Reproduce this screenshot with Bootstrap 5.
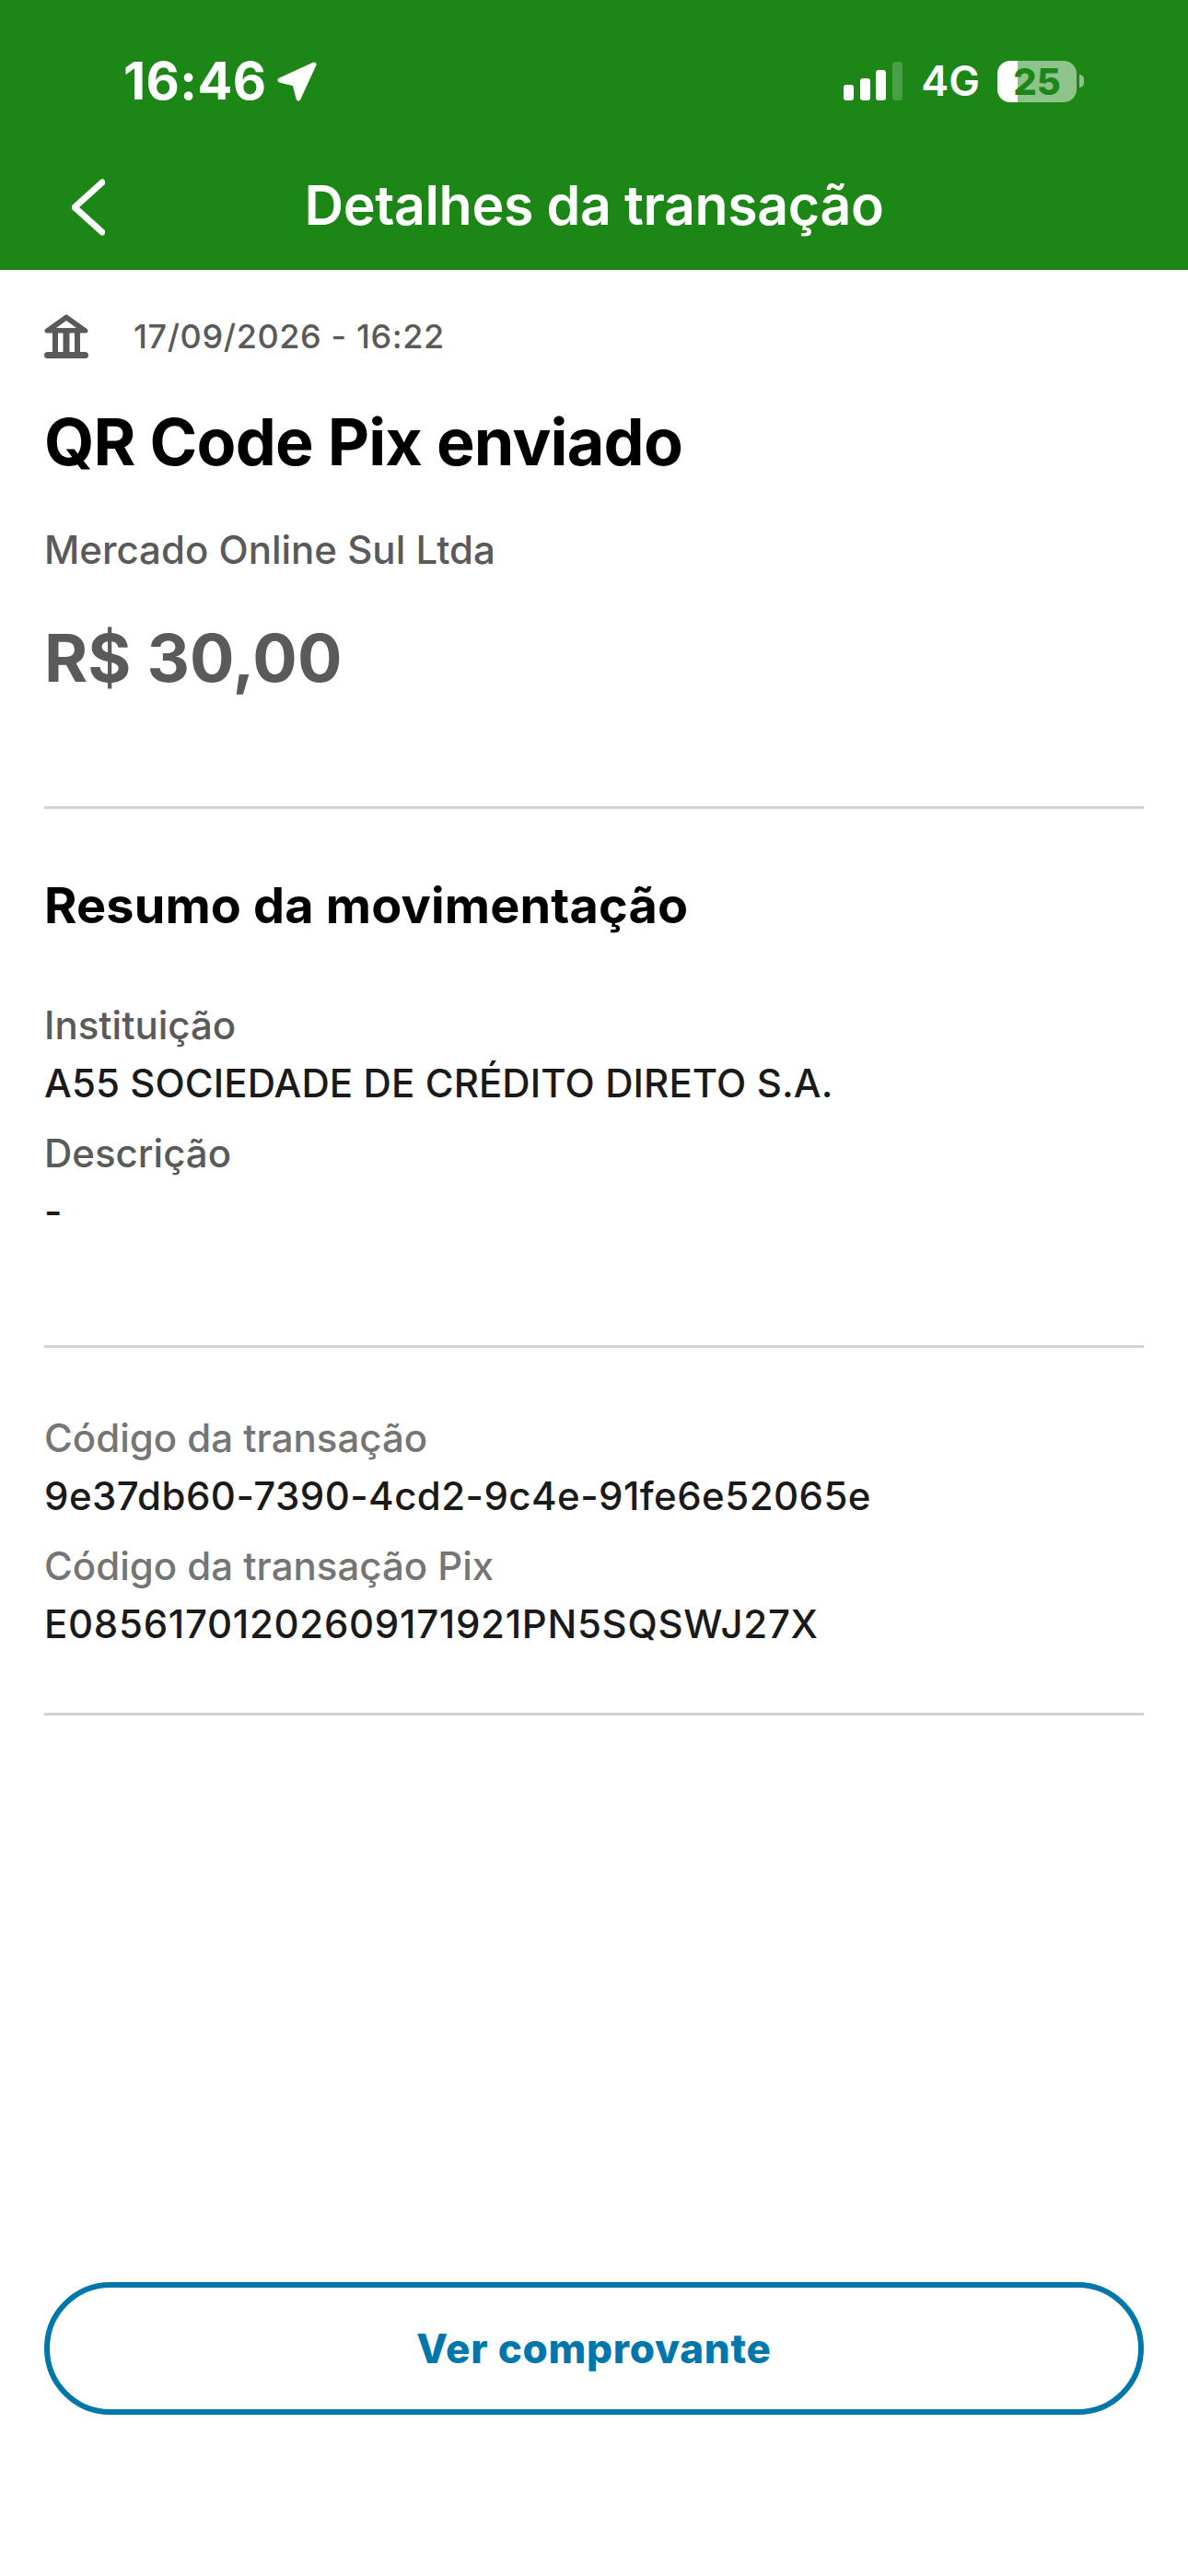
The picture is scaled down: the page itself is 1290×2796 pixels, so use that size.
<!DOCTYPE html>
<html lang="pt-BR">
<head>
    <meta charset="UTF-8">
    <meta name="viewport" content="width=device-width, initial-scale=1.0">
    <title>Detalhes da transação</title>
    <link rel="stylesheet" href="https://cdn.jsdelivr.net/npm/bootstrap@5.3.0/dist/css/bootstrap.min.css">
    <style>
        body {
            font-family: Inter, "Liberation Sans", sans-serif;
            background: #fff;
            height: 2796px;
        }
        .app-top {
            background: #1c8716;
            height: 293px;
            color: #fff;
        }
        .status-row {
            height: 164px;
            padding: 64px 113px 0 134px;
        }
        .clock {
            font-size: 56px;
            font-weight: 700;
            line-height: 48px;
            letter-spacing: .4px;
        }
        .loc-arrow {
            margin-left: 11px;
        }
        .net-label {
            font-size: 45px;
            font-weight: 600;
            line-height: 48px;
            margin: 0 19px;
        }
        .batt {
            width: 86px;
            height: 45px;
            border-radius: 14px;
            background: linear-gradient(to right, #fff 25%, rgba(255, 255, 255, .5) 25%);
            color: #1c8716;
            font-size: 40px;
            font-weight: 800;
            line-height: 45px;
            text-align: center;
        }
        .batt-tip {
            width: 5px;
            height: 14px;
            margin-left: 3px;
            border-radius: 0 7px 7px 0;
            background: rgba(255, 255, 255, .5);
        }
        .title-row {
            height: 118px;
            padding: 0 78px;
        }
        .screen-title {
            font-size: 59px;
            font-weight: 600;
            letter-spacing: -.35px;
            margin: 0;
        }
        .back-slot {
            width: 36px;
            margin-top: 4px;
        }
        .detail-wrap {
            padding: 0 48px;
        }
        .date-row {
            padding-top: 48px;
            color: #5a5a5a;
            font-size: 36px;
            font-weight: 500;
            letter-spacing: .6px;
            line-height: 48px;
            gap: 49px;
        }
        .main-title {
            font-size: 70px;
            font-weight: 700;
            letter-spacing: -.8px;
            color: #000;
            margin: 51px 0 0;
            line-height: 80px;
        }
        .sub-name {
            color: #5a5a5a;
            font-size: 42px;
            font-weight: 500;
            line-height: 50px;
            margin: 52px 0 0;
        }
        .price {
            color: #5a5a5a;
            font-size: 72px;
            font-weight: 700;
            line-height: 86px;
            margin: 49px 0 0;
        }
        .rule {
            border: 0;
            border-top: 3px solid #d2d2d2;
            opacity: 1;
            margin: 0;
        }
        .rule-one {
            margin-top: 118px;
        }
        .rule-two {
            margin-top: 120px;
        }
        .rule-three {
            margin-top: 71px;
        }
        .sec-title {
            font-size: 54px;
            font-weight: 700;
            letter-spacing: .15px;
            color: #000;
            line-height: 64px;
            margin: 73px 0 0;
        }
        .fields-one {
            margin-top: 73px;
        }
        .fields-two {
            margin-top: 73px;
        }
        .field-label {
            color: #5a5a5a;
            font-size: 42px;
            font-weight: 500;
            line-height: 50px;
            margin-bottom: 13px;
        }
        .field-label.soft {
            color: #757575;
        }
        .field-value {
            color: #1a1a1a;
            font-size: 42px;
            font-weight: 500;
            letter-spacing: .1px;
            line-height: 50px;
            margin-bottom: 26px;
        }
        .field-value.code-id {
            letter-spacing: .45px;
        }
        .field-value.code-pix {
            letter-spacing: .7px;
        }
        .comprovante-btn {
            height: 144px;
            margin-top: 615px;
            border: 6px solid #0077aa;
            border-radius: 72px;
            background: #fff;
            color: #0077aa;
            font-size: 44px;
            font-weight: 800;
            letter-spacing: .7px;
        }
    </style>
</head>
<body>
    <div class="app-top">
        <div class="status-row d-flex justify-content-between align-items-start">
            <div class="d-flex align-items-center">
                <span class="clock">16:46</span>
                <svg class="loc-arrow" width="45" height="44" viewBox="0 0 45 44"><path d="M41 4 4 21 20 25 24 41Z" fill="#fff" stroke="#fff" stroke-width="5" stroke-linejoin="round"/></svg>
            </div>
            <div class="d-flex align-items-center">
                <svg width="65" height="42" viewBox="0 0 65 42">
                    <rect x="0" y="25" width="11" height="17" rx="3" fill="#fff"/>
                    <rect x="18" y="18" width="11" height="24" rx="3" fill="#fff"/>
                    <rect x="35" y="9" width="11" height="33" rx="3" fill="#fff"/>
                    <rect x="53" y="0" width="11" height="42" rx="3" fill="#fff" fill-opacity=".2"/>
                </svg>
                <span class="net-label">4G</span>
                <div class="batt">25</div>
                <div class="batt-tip"></div>
            </div>
        </div>
        <div class="title-row d-flex align-items-center justify-content-between">
            <div class="back-slot">
                <svg class="d-block" width="36" height="62" viewBox="0 0 36 62"><path d="M33 4 3 31 33 58" fill="none" stroke="#fff" stroke-width="7" stroke-linecap="round" stroke-linejoin="round"/></svg>
            </div>
            <h1 class="screen-title">Detalhes da transação</h1>
            <div class="back-slot"></div>
        </div>
    </div>

    <div class="detail-wrap">
        <div class="date-row d-flex align-items-center">
            <svg width="48" height="48" viewBox="0 0 48 48" fill="#5a5a5a">
                <path d="M24 3 3 18H45Z" stroke="#5a5a5a" stroke-width="5" stroke-linejoin="round"/>
                <path d="M24 7 13 15H35Z" fill="#fff"/>
                <rect x="9" y="20" width="6" height="24"/>
                <rect x="20.5" y="20" width="7" height="24"/>
                <rect x="33" y="20" width="6" height="24"/>
                <rect x="0" y="41" width="48" height="7" rx="3.5"/>
            </svg>
            <span>17/09/2026 - 16:22</span>
        </div>
        <h2 class="main-title">QR Code Pix enviado</h2>
        <p class="sub-name">Mercado Online Sul Ltda</p>
        <p class="price">R$ 30,00</p>
        <hr class="rule rule-one">

        <h3 class="sec-title">Resumo da movimentação</h3>
        <div class="fields-one">
            <div class="field-label">Instituição</div>
            <div class="field-value">A55 SOCIEDADE DE CRÉDITO DIRETO S.A.</div>
            <div class="field-label">Descrição</div>
            <div class="field-value">-</div>
        </div>
        <hr class="rule rule-two">

        <div class="fields-two">
            <div class="field-label soft">Código da transação</div>
            <div class="field-value code-id">9e37db60-7390-4cd2-9c4e-91fe6e52065e</div>
            <div class="field-label soft">Código da transação Pix</div>
            <div class="field-value code-pix">E08561701202609171921PN5SQSWJ27X</div>
        </div>
        <hr class="rule rule-three">

        <button class="comprovante-btn btn w-100">Ver comprovante</button>
    </div>

    <script src="https://cdn.jsdelivr.net/npm/bootstrap@5.3.0/dist/js/bootstrap.bundle.min.js"></script>
</body>
</html>
